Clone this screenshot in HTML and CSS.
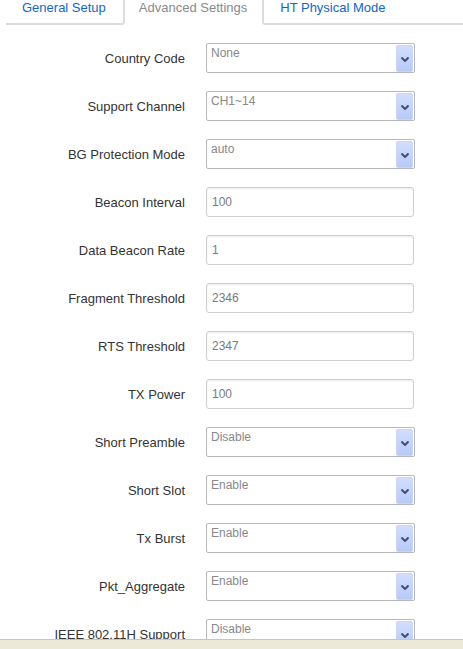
FILE: index.html
```html
<!DOCTYPE html>
<html>
<head>
<meta charset="utf-8">
<link rel="stylesheet" href="styles.css">
</head>
<body>
<ul class="tabs">
  <li class="tab"><a>General Setup</a></li>
  <li class="tab active"><a>Advanced Settings</a></li>
  <li class="tab"><a>HT Physical Mode</a></li>
</ul>
<div class="form">
  <div class="row"><label>Country Code</label><div class="select"><span>None</span><i class="btn"><svg width="8" height="5" viewBox="0 0 8 5"><path d="M0.5 0.5 L4 4 L7.5 0.5" fill="none" stroke="#3d5070" stroke-width="2"/></svg></i></div></div>
  <div class="row"><label>Support Channel</label><div class="select"><span>CH1~14</span><i class="btn"><svg width="8" height="5" viewBox="0 0 8 5"><path d="M0.5 0.5 L4 4 L7.5 0.5" fill="none" stroke="#3d5070" stroke-width="2"/></svg></i></div></div>
  <div class="row"><label>BG Protection Mode</label><div class="select"><span>auto</span><i class="btn"><svg width="8" height="5" viewBox="0 0 8 5"><path d="M0.5 0.5 L4 4 L7.5 0.5" fill="none" stroke="#3d5070" stroke-width="2"/></svg></i></div></div>
  <div class="row"><label>Beacon Interval</label><div class="input">100</div></div>
  <div class="row"><label>Data Beacon Rate</label><div class="input">1</div></div>
  <div class="row"><label>Fragment Threshold</label><div class="input">2346</div></div>
  <div class="row"><label>RTS Threshold</label><div class="input">2347</div></div>
  <div class="row"><label>TX Power</label><div class="input">100</div></div>
  <div class="row"><label>Short Preamble</label><div class="select"><span>Disable</span><i class="btn"><svg width="8" height="5" viewBox="0 0 8 5"><path d="M0.5 0.5 L4 4 L7.5 0.5" fill="none" stroke="#3d5070" stroke-width="2"/></svg></i></div></div>
  <div class="row"><label>Short Slot</label><div class="select"><span>Enable</span><i class="btn"><svg width="8" height="5" viewBox="0 0 8 5"><path d="M0.5 0.5 L4 4 L7.5 0.5" fill="none" stroke="#3d5070" stroke-width="2"/></svg></i></div></div>
  <div class="row"><label>Tx Burst</label><div class="select"><span>Enable</span><i class="btn"><svg width="8" height="5" viewBox="0 0 8 5"><path d="M0.5 0.5 L4 4 L7.5 0.5" fill="none" stroke="#3d5070" stroke-width="2"/></svg></i></div></div>
  <div class="row"><label>Pkt_Aggregate</label><div class="select"><span>Enable</span><i class="btn"><svg width="8" height="5" viewBox="0 0 8 5"><path d="M0.5 0.5 L4 4 L7.5 0.5" fill="none" stroke="#3d5070" stroke-width="2"/></svg></i></div></div>
  <div class="row"><label>IEEE 802.11H Support</label><div class="select"><span>Disable</span><i class="btn"><svg width="8" height="5" viewBox="0 0 8 5"><path d="M0.5 0.5 L4 4 L7.5 0.5" fill="none" stroke="#3d5070" stroke-width="2"/></svg></i></div></div>
</div>
<div class="statusbar"></div>
</body>
</html>
```
FILE: styles.css
```css
html, body {
  margin: 0;
  padding: 0;
  background: #fff;
  font-family: "Liberation Sans", Arial, sans-serif;
  font-size: 12px;
  overflow: hidden;
  height: 649px;
}
.tabs {
  list-style: none;
  margin: 0 0 0 6px;
  padding: 0;
  display: flex;
  border-bottom: 2px solid #dcdcdc;
  height: 23px;
}
.tab {
  height: 23px;
  padding: 0 17px 0 16px;
  line-height: 14px;
  font-size: 13px;
}
.tab a {
  color: #1266c8;
  display: block;
  padding-top: 1px;
}
.tab.active {
  border-left: 2px solid #dcdcdc;
  border-right: 2px solid #dcdcdc;
  border-bottom: 2px solid #fff;
  background: #fff;
  padding: 0 15px 0 14px;
}
.tab.active a {
  color: #8a8a8a;
}
.form {
  padding-top: 9px;
}
.row {
  height: 48px;
  display: flex;
  align-items: center;
}
.row label {
  width: 185px;
  text-align: right;
  color: #333;
  margin-right: 21px;
  font-size: 13px;
}
.select {
  width: 207px;
  height: 28px;
  border: 1px solid #b8b8b8;
  border-radius: 2px;
  display: flex;
  justify-content: space-between;
  align-items: flex-start;
  background: #fff;
}
.select span {
  color: #888;
  padding: 2px 0 0 4px;
  line-height: 14px;
}
.btn {
  margin: 1px 1px 0 0;
  border: 1px solid #c8d5f8;
  border-radius: 2px;
  background: linear-gradient(#d3defc, #b6c9f6);
  display: flex;
  align-items: center;
  justify-content: center;
  box-sizing: border-box;
  width: 17px;
  height: 27px;
}
.btn svg {
  display: block;
  margin-top: 1px;
}
.input {
  width: 201px;
  height: 28px;
  border: 1px solid #cfcfcf;
  border-radius: 3px;
  box-shadow: inset 0 1px 2px rgba(0,0,0,0.08);
  color: #7a7a7a;
  padding-left: 5px;
  line-height: 28px;
}
.statusbar {
  position: fixed;
  left: 0;
  right: 0;
  bottom: 0;
  height: 9px;
  background: #ece9d8;
  border-top: 1px solid #c9c6b6;
}
```
